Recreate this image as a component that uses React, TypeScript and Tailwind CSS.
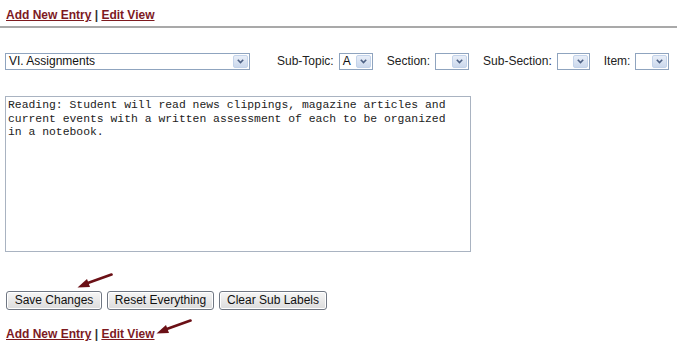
import React from 'react';

// 下拉框（旧式 Windows 外观）
function Dropdown({ value, width }: { value: string; width: number }) {
  return (
    <div
      className="flex h-[17px] items-stretch border border-[#8fa4bf] bg-white"
      style={{ width }}
    >
      <span className="flex-1 truncate pl-[3px] text-[12px] leading-[15px] text-[#111]">{value}</span>
      <span className="m-[1px] flex w-[15px] items-center justify-center rounded-[2px] border border-[#c3d3ea] bg-gradient-to-b from-[#e8eef8] to-[#cbd8ec]">
        <svg width="7" height="5" viewBox="0 0 7 5">
          <path d="M0.8 0.8 L3.5 3.6 L6.2 0.8" fill="none" stroke="#4d6185" strokeWidth="1.6" />
        </svg>
      </span>
    </div>
  );
}

function Links() {
  return (
    <div className="text-[12px] font-bold leading-[14px] text-[#7d1a1f]">
      <a className="underline decoration-1 underline-offset-[1px]">Add New Entry</a>
      <span className="text-[#333]"> | </span>
      <a className="underline decoration-1 underline-offset-[1px]">Edit View</a>
    </div>
  );
}

function Arrow() {
  return (
    <svg width="36" height="16" viewBox="0 0 36 16">
      <path d="M34.5 1.5 L8 11" stroke="#6b1016" strokeWidth="2.6" strokeLinecap="round" />
      <path d="M0.5 14.5 L10 6 L13 14 Z" fill="#6b1016" />
    </svg>
  );
}

function Btn({ label, width }: { label: string; width: number }) {
  return (
    <button
      className="h-[19px] rounded-[3px] border border-[#707783] bg-gradient-to-b from-[#f6f6f6] to-[#dcdcdc] text-[12px] leading-[17px] text-[#111] shadow-[inset_0_0_0_1px_#fff]"
      style={{ width }}
    >
      {label}
    </button>
  );
}

const TEXT =
  'Reading: Student will read news clippings, magazine articles and\ncurrent events with a written assessment of each to be organized\nin a notebook.';

export default function App() {
  return (
    <div className="h-[361px] w-[677px] bg-white font-['Liberation_Sans',Arial,sans-serif]">
      <div className="pl-[6px] pt-[8px]">
        <Links />
      </div>
      <div className="mt-[4px] h-[2px] bg-[#a9a9a9]" />

      {/* 主题选择行 */}
      <div className="mt-[24px] flex items-center pl-[5px] text-[12px] text-[#222]">
        <Dropdown value="VI. Assignments" width={245} />
        <span className="ml-[27px] mr-[5px]">Sub-Topic:</span>
        <Dropdown value="A" width={34} />
        <span className="ml-[14px] mr-[5px]">Section:</span>
        <Dropdown value="" width={34} />
        <span className="ml-[14px] mr-[5px]">Sub-Section:</span>
        <Dropdown value="" width={33} />
        <span className="ml-[14px] mr-[5px]">Item:</span>
        <Dropdown value="" width={34} />
      </div>

      {/* 内容编辑 */}
      <div className="mt-[26px] pl-[5px]">
        <textarea
          readOnly
          wrap="off"
          value={TEXT}
          className="block h-[156px] w-[466px] resize-none overflow-hidden border border-[#a9b3c1] px-[2px] py-[2px] font-['Liberation_Mono','Courier_New',monospace] text-[11.4px] leading-[13.5px] text-[#222] outline-none"
        />
      </div>

      <div className="mt-[21px] pl-[77px]">
        <Arrow />
      </div>

      <div className="mt-[2px] flex gap-[5px] pl-[6px]">
        <Btn label="Save Changes" width={96} />
        <Btn label="Reset Everything" width={107} />
        <Btn label="Clear Sub Labels" width={108} />
      </div>

      <div className="mt-[9px] flex items-start pl-[6px]">
        <div className="mt-[8px]">
          <Links />
        </div>
        <div className="ml-[1px]">
          <Arrow />
        </div>
      </div>
    </div>
  );
}
